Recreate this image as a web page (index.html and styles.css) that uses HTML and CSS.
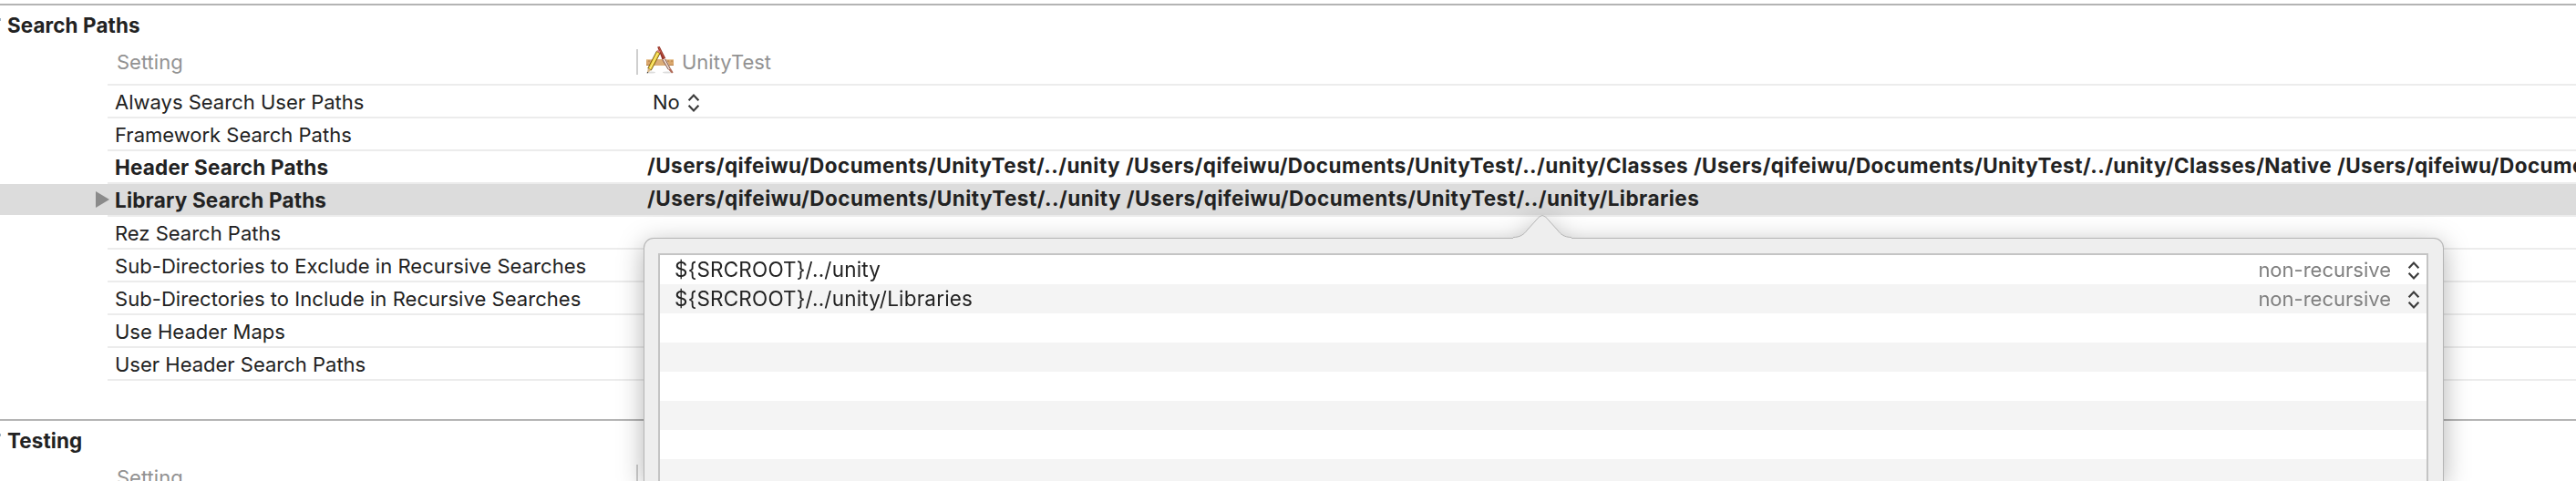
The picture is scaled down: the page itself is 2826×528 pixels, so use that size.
FILE: index.html
```html
<!DOCTYPE html>
<html lang="en">
<head>
<meta charset="utf-8">
<title>Build Settings</title>
<link rel="stylesheet" href="styles.css">
</head>
<body>
<svg class="defs" width="0" height="0" aria-hidden="true">
  <symbol id="updown" viewBox="0 0 14 20"><path d="M1.6 7.2 7 1.6l5.4 5.6M1.6 12.8 7 18.4l5.4-5.6" fill="none" stroke="#3c3c3c" stroke-width="2.2"/></symbol>
  <symbol id="app" viewBox="0 0 30 30">
    <ellipse cx="5" cy="28.6" rx="5" ry="1" fill="#ddd"/><ellipse cx="23" cy="28.6" rx="5" ry="1" fill="#ddd"/>
    <path d="M0 14h30v7H0z" fill="#d9a66c"/><path d="M0 14h30v1.2H0z" fill="#e9c799"/><path d="M0 20h30v1H0z" fill="#b9834b"/>
    <path d="M3 15v2M7 15v2M20 15v2M24 15v2M28 15v2" stroke="#a8763f" stroke-width=".8"/>
    <path d="M11 7 16 10 20 20H7z" fill="#fff"/><path d="M9 14h10l2.500 7H7z" fill="#dcae78"/>
    <path d="M12.200.6 14.600 0l6.600 13-3.600 1.600z" fill="#8e2a1f"/><path d="m13.800 1 5.800 12.400" stroke="#c9604c" stroke-width=".9"/>
    <path d="m17.600 14.600 3.600-1.600 5.600 11-2.600 1.300z" fill="#ead9cd"/><path d="m20.800 14 5.400 10.300M17.800 14.600l6.400 10.700" stroke="#7b4b40" stroke-width=".9"/>
    <path d="m24.200 25.300 2.600-1.300 2.800 4.400-1.600 1.200z" fill="#b06a58"/>
    <path d="M11.400 5.200 15 7.600 5.400 26 1.800 24z" fill="#f0cf35" stroke="#6f5516" stroke-width=".9"/><path d="M12.700 7.400 4 24.400" stroke="#fff5a0" stroke-width="1"/>
    <path d="m11.400 5.200 1.400-1.500 2.600 1.300-.4 2.600z" fill="#d98078"/>
    <path d="M1.800 24 5.400 26 .9 29.600z" fill="#d9b98a"/><path d="m1.200 27.800 1.200.7-1.600 1.300z" fill="#333"/>
  </symbol>
</svg>
<main class="settings">
  <section class="group">
    <h2 class="group-title">Search Paths</h2>
    <div class="head"><span class="head-name">Setting</span><span class="head-target"><svg class="app-icon"><use href="#app"/></svg><span class="target-name">UnityTest</span></span></div>
    <div class="row"><span class="name">Always Search User Paths</span><span class="choice">No<svg class="updown"><use href="#updown"/></svg></span></div>
    <div class="row"><span class="name">Framework Search Paths</span></div>
    <div class="row strong"><span class="name">Header Search Paths</span><span class="value many">/Users/qifeiwu/Documents/UnityTest/../unity /Users/qifeiwu/Documents/UnityTest/../unity/Classes /Users/qifeiwu/Documents/UnityTest/../unity/Classes/Native /Users/qifeiwu/Documents</span></div>
    <div class="row strong selected"><svg class="disclosure" viewBox="0 0 15 18"><path d="M0 0 15 9 0 18z" fill="#8b8b8b"/></svg><span class="name">Library Search Paths</span><span class="value">/Users/qifeiwu/Documents/UnityTest/../unity /Users/qifeiwu/Documents/UnityTest/../unity/Libraries</span></div>
    <div class="row"><span class="name">Rez Search Paths</span></div>
    <div class="row"><span class="name long">Sub-Directories to Exclude in Recursive Searches</span></div>
    <div class="row"><span class="name long">Sub-Directories to Include in Recursive Searches</span></div>
    <div class="row"><span class="name">Use Header Maps</span></div>
    <div class="row"><span class="name">User Header Search Paths</span></div>
  </section>
  <section class="group last">
    <h2 class="group-title">Testing</h2>
    <div class="head"><span class="head-name">Setting</span><span class="head-target"></span></div>
  </section>
</main>
<aside class="popover">
  <svg class="arrow" viewBox="0 0 64 26"><path d="M0 26V24.500C8 24.500 12 21 15 17L28.500 2Q32 -1 35.500 2L49 17C52 21 56 24.500 64 24.500V26z" fill="#eee"/><path d="M0 24.500C8 24.500 12 21 15 17L28.500 2Q32 -1 35.500 2L49 17C52 21 56 24.500 64 24.500" fill="none" stroke="#b4b4b4"/></svg>
  <div class="panel">
    <div class="list">
      <div class="path"><span class="path-text">${SRCROOT}/../unity</span><span class="mode">non-recursive</span><svg class="updown"><use href="#updown"/></svg></div>
      <div class="path"><span class="path-text">${SRCROOT}/../unity/Libraries</span><span class="mode">non-recursive</span><svg class="updown"><use href="#updown"/></svg></div>
      <div class="path"></div><div class="path"></div><div class="path"></div><div class="path"></div><div class="path"></div><div class="path"></div>
    </div>
  </div>
</aside>
</body>
</html>
```
FILE: styles.css
```css
* { box-sizing: border-box; }
html { overflow: hidden; }
body { margin: 0; width: 2826px; height: 528px; overflow: hidden; position: relative; background: #fff; color: #222; font: 22px/34px Inter, "Liberation Sans", sans-serif; white-space: nowrap; }
.defs { position: absolute; }
svg { display: block; flex: none; }
.settings { padding-top: 4px; height: 528px; overflow: hidden; }
.group { height: 456px; border-top: 2px solid #b4b4b4; }
.group.last { height: 68px; }
.group-title { margin: 0; padding: 5px 0 0 8px; height: 44px; font-size: 22.4px; line-height: 34px; font-weight: 700; letter-spacing: .12px; background: linear-gradient(115deg, #9fb4c6 50%, transparent 50%) 0 14px / 2px 3px no-repeat; }
.head { display: flex; height: 44px; margin-left: 118px; padding-left: 10px; border-bottom: 2px solid #ececec; color: #929292; }
.head-name { width: 570px; padding-top: 1px; }
.head-target { display: flex; align-items: flex-start; height: 28px; margin-top: 4px; padding-left: 9px; border-left: 2px solid #cfcfcf; }
.app-icon { width: 30px; height: 30px; margin-top: -3px; }
.target-name { margin: -3px 0 0 9px; }
.row { display: flex; height: 36px; padding: 1px 0 0 126px; background: linear-gradient(#ececec, #ececec) 118px 34px / 100% 2px no-repeat; }
.name { flex: none; width: 584px; }
.long { letter-spacing: .05px; }
.choice { display: flex; padding-left: 6px; }
.choice .updown { margin: 8px 0 0 8px; }
.updown { width: 14px; height: 20px; }
.strong { font-size: 22.5px; font-weight: 700; }
.strong .name { letter-spacing: .2px; }
.strong .value { flex: none; margin-top: -2px; letter-spacing: .48px; }
.strong .many { letter-spacing: .46px; }
.selected { padding-left: 105px; background: linear-gradient(#ececec, #ececec) 118px 34px / 100% 2px no-repeat, linear-gradient(#dcdcdc, #dcdcdc) 0 0 / 100% 34px no-repeat; }
.disclosure { width: 15px; height: 18px; margin: 7px 6px 0 0; }
.popover { position: absolute; left: 706px; top: 236px; width: 1975px; height: 292px; filter: drop-shadow(0 6px 14px rgba(0, 0, 0, .3)); }
.arrow { position: relative; z-index: 1; width: 64px; height: 26px; margin-left: 954px; }
.panel { height: 267px; margin-top: -1px; padding: 16px 16px 0 15px; border: 1px solid #b4b4b4; border-bottom: 0; border-radius: 11px 11px 0 0; background: #eee; }
.list { height: 250px; overflow: hidden; border: 2px solid #c4c4c4; border-bottom: 0; background: #fff; }
.path { display: flex; height: 32px; padding: 0 7px 0 16px; line-height: 32px; }
.path:nth-child(even) { background: #f4f4f4; }
.path-text { flex: 1; font-size: 22.5px; letter-spacing: .19px; }
.mode { color: #808080; }
.path .updown { margin: 7px 0 0 18px; }
```
